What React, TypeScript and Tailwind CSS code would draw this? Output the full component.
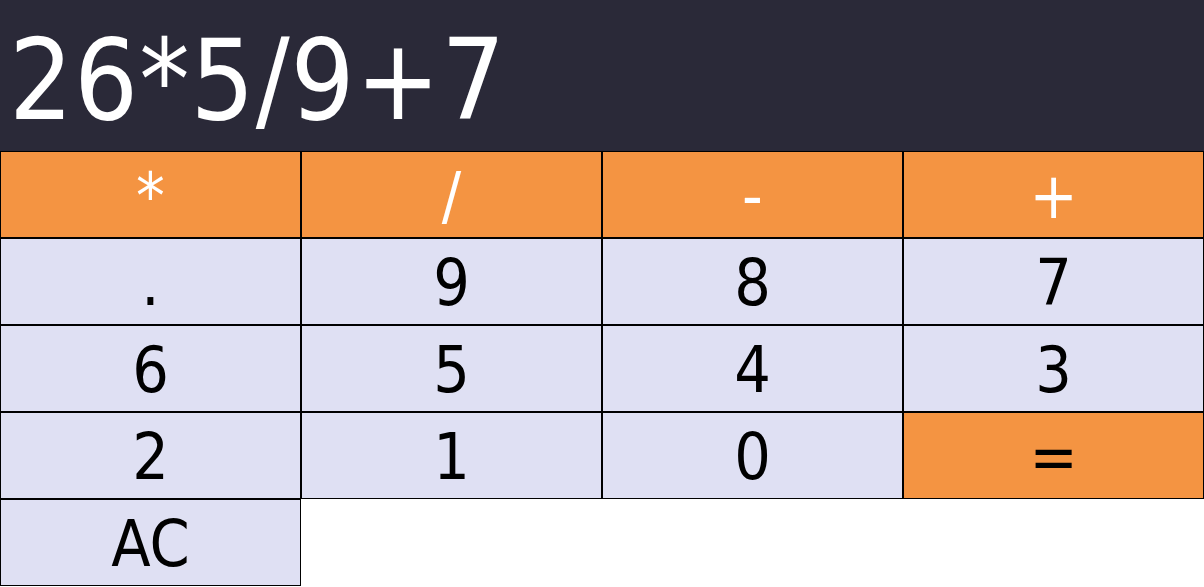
const keys: { label: string; kind: "op" | "num" | "eq" }[] = [
  { label: "*", kind: "op" },
  { label: "/", kind: "op" },
  { label: "-", kind: "op" },
  { label: "+", kind: "op" },
  { label: ".", kind: "num" },
  { label: "9", kind: "num" },
  { label: "8", kind: "num" },
  { label: "7", kind: "num" },
  { label: "6", kind: "num" },
  { label: "5", kind: "num" },
  { label: "4", kind: "num" },
  { label: "3", kind: "num" },
  { label: "2", kind: "num" },
  { label: "1", kind: "num" },
  { label: "0", kind: "num" },
  { label: "=", kind: "eq" },
  { label: "AC", kind: "num" },
];

export default function App() {
  return (
    <div className="w-[1204px] h-[587px] bg-white font-['DejaVu_Sans_Condensed','DejaVu_Sans',sans-serif]">
      <div className="h-[151px] bg-[#2a2938] text-white text-[112px] leading-none pl-[9px] pt-[24px] tracking-[1px]">
        26*5/9+7
      </div>
      <div className="grid grid-cols-4">
        {keys.map((k) => (
          <button
            key={k.label}
            className={
              "h-[87px] border border-black flex items-center justify-center text-[64px] leading-none pt-[3px] " +
              (k.kind === "op"
                ? "bg-[#f49442] text-white"
                : k.kind === "eq"
                ? "bg-[#f49442] text-black"
                : "bg-[#dfe0f3] text-black")
            }
          >
            {k.label}
          </button>
        ))}
      </div>
    </div>
  );
}
